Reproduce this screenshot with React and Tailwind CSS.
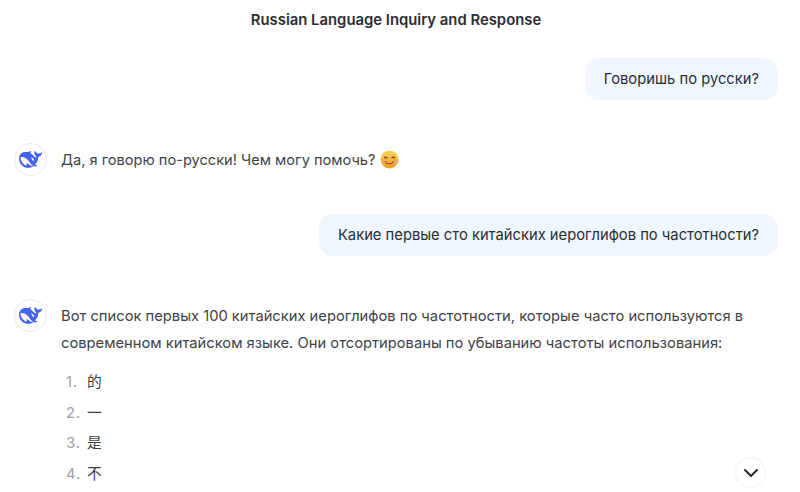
const font = { fontFamily: '"Inter", "Noto Sans CJK SC", sans-serif' };

function Whale() {
  return (
    <svg width="23" height="23" viewBox="0 0 24 24" fill="#4463f0" fillRule="evenodd">
      <path d="M23.748 4.482c-.254-.124-.364.113-.512.234-.051.039-.094.09-.137.136-.372.397-.806.657-1.373.626-.829-.046-1.537.214-2.163.848-.133-.782-.575-1.248-1.247-1.548-.352-.156-.708-.311-.955-.65-.172-.241-.219-.51-.305-.774-.055-.16-.11-.323-.293-.35-.2-.031-.278.136-.356.276-.313.572-.434 1.202-.422 1.84.027 1.436.633 2.58 1.838 3.393.137.093.172.187.129.323-.082.28-.18.552-.266.833-.055.179-.137.217-.329.14a5.526 5.526 0 01-1.736-1.18c-.857-.828-1.631-1.742-2.597-2.458a11.365 11.365 0 00-.689-.471c-.985-.957.13-1.743.388-1.836.27-.098.093-.432-.779-.428-.872.004-1.67.295-2.687.684a3.055 3.055 0 01-.465.137 9.597 9.597 0 00-2.883-.102c-1.885.21-3.39 1.102-4.497 2.623C.082 8.606-.231 10.684.152 12.85c.403 2.284 1.569 4.175 3.36 5.653 1.858 1.533 3.997 2.284 6.438 2.14 1.482-.085 3.133-.284 4.994-1.86.47.234.962.327 1.78.397.63.059 1.236-.03 1.705-.128.735-.156.684-.837.419-.961-2.155-1.004-1.682-.595-2.113-.926 1.096-1.296 2.746-2.642 3.392-7.003.05-.347.007-.565 0-.845-.004-.17.035-.237.23-.256a4.173 4.173 0 001.545-.475c1.396-.763 1.96-2.015 2.093-3.517.02-.23-.004-.467-.247-.588zM11.581 18c-2.089-1.642-3.102-2.183-3.52-2.16-.392.024-.321.471-.235.763.09.288.207.486.371.739.114.167.192.416-.113.603-.673.416-1.842-.14-1.897-.167-1.361-.802-2.5-1.86-3.301-3.307-.774-1.393-1.224-2.887-1.298-4.482-.02-.386.093-.522.477-.592a4.696 4.696 0 011.529-.039c2.132.312 3.946 1.265 5.468 2.774.868.86 1.525 1.887 2.202 2.891.72 1.066 1.494 2.082 2.48 2.914.348.292.625.514.891.677-.802.09-2.14.11-3.054-.614zm1-6.44a.306.306 0 01.415-.287.302.302 0 01.2.288.306.306 0 01-.31.307.303.303 0 01-.304-.308zm3.11 1.596c-.2.081-.399.151-.59.16a1.245 1.245 0 01-.798-.254c-.274-.23-.47-.358-.552-.758a1.73 1.73 0 01.016-.588c.07-.327-.008-.537-.239-.727-.187-.156-.426-.199-.688-.199a.559.559 0 01-.254-.078c-.11-.054-.2-.19-.114-.358.028-.054.16-.186.192-.21.356-.202.767-.136 1.146.016.352.144.618.408 1.001.782.391.451.462.576.685.914.176.265.336.537.445.848.067.195-.019.354-.25.452z" />
    </svg>
  );
}

function Avatar() {
  return (
    <div className="w-[33px] h-[33px] shrink-0 rounded-full border border-[#e6eaf2] bg-white flex items-center justify-center">
      <Whale />
    </div>
  );
}

function Smile() {
  return (
    <svg width="19" height="19" viewBox="0 0 19 19" className="inline-block ml-[5px] align-[-4px]">
      <defs>
        <linearGradient id="face" x1="0" y1="0" x2="0" y2="1">
          <stop offset="0" stopColor="#fbd35c" />
          <stop offset="1" stopColor="#f09a22" />
        </linearGradient>
      </defs>
      <circle cx="9.500" cy="9.500" r="9" fill="url(#face)" />
      <ellipse cx="4.300" cy="10.800" rx="2.200" ry="1.500" fill="#f59a7a" opacity="0.700" />
      <ellipse cx="14.700" cy="10.800" rx="2.200" ry="1.500" fill="#f59a7a" opacity="0.700" />
      <path d="M4.300 8c.6-1.200 2.200-1.200 2.800 0M11.900 8c.6-1.200 2.200-1.200 2.800 0" stroke="#7a4a12" strokeWidth="1.100" fill="none" strokeLinecap="round" />
      <path d="M5.500 11.800c1.800 2.800 6.200 2.800 8 0" stroke="#7a4a12" strokeWidth="1.100" fill="none" strokeLinecap="round" />
    </svg>
  );
}

function UserBubble({ children, className }) {
  return (
    <div className={"flex justify-end pr-[22px] " + className}>
      <div className="h-[42px] px-[19px] pt-[1px] flex items-center rounded-[14px] bg-[#eff6ff] text-[14.750px] text-[#2c2e33] whitespace-nowrap">
        {children}
      </div>
    </div>
  );
}

const items = ["的", "一", "是", "不"];

export default function App() {
  return (
    <div style={font} className="relative w-[800px] h-[492px] overflow-hidden bg-white">
      <div className="h-[40px] pr-[8px] flex items-center justify-center text-[14.850px] font-semibold text-[#2c2e33]">
        Russian Language Inquiry and Response
      </div>

      <UserBubble className="mt-[18px]">Говоришь по русски?</UserBubble>

      <div className="mt-[43px] pl-[14px] flex gap-[14px]">
        <Avatar />
        <div className="pt-[4px] text-[14.600px] leading-[27px] text-[#404248] whitespace-nowrap">
          Да, я говорю по-русски! Чем могу помочь?
          <Smile />
        </div>
      </div>

      <UserBubble className="mt-[38px]">Какие первые сто китайских иероглифов по частотности?</UserBubble>

      <div className="mt-[43px] pl-[14px] flex gap-[14px]">
        <Avatar />
        <div className="flex-1 text-[14.720px] text-[#404248] whitespace-nowrap">
          <p className="pt-[4px] leading-[26.500px]">
            Вот список первых 100 китайских иероглифов по частотности, которые часто используются в
            <br />
            современном китайском языке. Они отсортированы по убыванию частоты использования:
          </p>
          <ol className="mt-[11px] flex flex-col">
            {items.map((c, i) => (
              <li key={c} className="h-[30.500px] flex items-center">
                <span className="w-[26px] pl-[5px] text-[#a0a0a0] tracking-[1px]">{i + 1}.</span>
                <span className="text-[#404248]">{c}</span>
              </li>
            ))}
          </ol>
        </div>
      </div>

      <button className="absolute left-[735px] top-[457px] w-[31px] h-[31px] rounded-full border border-[#f0f0f0] bg-white flex items-center justify-center">
        <svg width="16" height="10" viewBox="0 0 16 10" fill="none">
          <path d="M2 2l6 6 6-6" stroke="#26282c" strokeWidth="2" strokeLinecap="round" strokeLinejoin="round" />
        </svg>
      </button>
    </div>
  );
}
